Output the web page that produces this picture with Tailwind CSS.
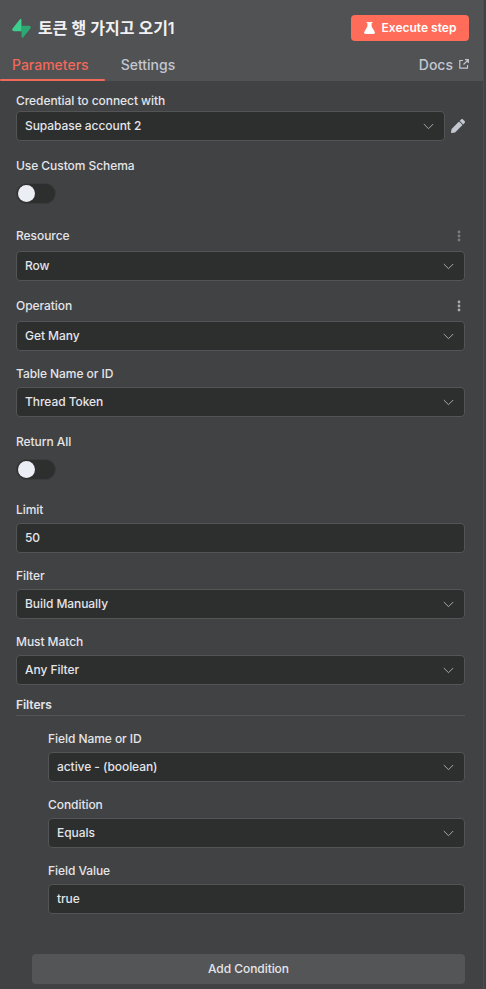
<!DOCTYPE html>
<html lang="en">
<head>
  <meta charset="UTF-8" />
  <title>Node Parameters</title>
  <script src="https://cdn.jsdelivr.net/npm/@tailwindcss/browser@4"></script>
</head>
<body class="bg-[#414244] font-['Inter','Noto_Sans_CJK_KR',sans-serif] text-[12px] font-medium tracking-[-0.06px] text-[#e4e5e9] h-[989px] overflow-hidden">
  <div class="w-[484px] h-[989px] border-r border-r-[#4c4d4f]">

    <!-- Header -->
    <div class="bg-[#515254] h-[81px] relative">
      <div class="flex justify-between pl-[12px] pr-[14px] pt-[15px] h-[56px] items-start">
        <div class="flex items-center h-[26px] gap-[7px]">
          <svg class="w-[19px] h-[19px]" viewBox="0 0 109 113">
            <path d="M63.7 110.3c-2.9 3.6-8.7 1.6-8.8-3l-1-67.5h45.8c8.3 0 12.9 9.6 7.7 16z" fill="#2ea872"/>
            <path d="M45.3 2.1c2.9-3.6 8.7-1.6 8.8 3l.4 67.5H9.3c-8.3 0-12.9-9.6-7.7-16z" fill="#3ecf8e"/>
          </svg>
          <span class="text-[16px] font-semibold text-[#f1f1f3] tracking-[0px]">토큰 행 가지고 오기1</span>
        </div>
        <button class="w-[118px] h-[26px] bg-[#ff6d5a] rounded-[4px] flex items-center justify-center gap-[7px] text-white font-semibold text-[12px] tracking-[0px]">
          <svg class="w-[11px] h-[12px]" viewBox="0 0 11 12" fill="#fff">
            <path d="M2.5 0h6v1H7.6v3.4L10.8 10c.4.9-.2 2-1.2 2H1.4C.4 12-.2 10.900.2 10l3.2-5.600V1h-.9z"/>
          </svg>
          Execute step
        </button>
      </div>
      <div class="flex items-center justify-between pl-[12px] pr-[14px] h-[16px] text-[14px] tracking-[0px]">
        <div class="flex gap-[32px]">
          <span class="text-[#f0695a] font-medium">Parameters</span>
          <span class="text-[#c3c7d0] font-medium">Settings</span>
        </div>
        <div class="flex items-center gap-[6px] text-[#c3c7d0]">
          <span>Docs</span>
          <svg class="w-[10px] h-[10px]" viewBox="0 0 10 10" fill="none" stroke="#c3c7d0" stroke-width="1.200">
            <path d="M4 1.500H.8v7.700h7.700V6M4.500 5.500 9.200.8M6 .7h3.300V4"/>
          </svg>
        </div>
      </div>
      <div class="absolute left-0 bottom-0 w-[105px] h-[2px] bg-[#f0695a] rounded-full"></div>
    </div>

    <!-- Parameters -->
    <div class="pl-[16px] pr-[18px]">
      <div class="pt-[10px]">
        <div class="h-[20px] leading-[20px]">Credential to connect with</div>
        <div class="flex items-center">
          <div class="w-[429px] shrink-0 h-[30px] bg-[#2d2e2e] border border-[#535456] rounded-[4px] flex items-center justify-between pl-[8px] pr-[10px]">
            <span>Supabase account 2</span>
            <svg class="w-[11px] h-[7px]" viewBox="0 0 11 7" fill="none" stroke="#a5a7ac" stroke-width="1"><path d="M.8 1l4.700 4.700L10.200 1"/></svg>
          </div>
          <svg class="w-[14px] h-[14px] ml-[6px] shrink-0" viewBox="0 0 512 512" fill="#c3c7d0">
            <path d="M497.900 142.100l-46.100 46.100c-4.700 4.700-12.300 4.700-17 0l-111-111c-4.700-4.700-4.700-12.300 0-17l46.100-46.100c18.700-18.700 49.100-18.700 67.900 0l60.100 60.100c18.800 18.700 18.800 49.100 0 67.900zM284.200 99.800L21.600 362.400.4 483.900c-2.900 16.400 11.400 30.600 27.800 27.800l121.500-21.300 262.600-262.600c4.700-4.700 4.700-12.300 0-17l-111-111c-4.800-4.700-12.400-4.700-17.100 0z"/>
          </svg>
        </div>
      </div>

      <div class="mt-[15px] h-[20px] leading-[20px]">Use Custom Schema</div>
      <div class="mt-[7px] w-[40px] h-[21px] bg-[#2d2e2e] border border-[#3a3b3d] rounded-full flex items-center pl-[1px]">
        <div class="w-[17px] h-[17px] bg-[#eceef5] rounded-full"></div>
      </div>

      <div class="mt-[22px] h-[20px] leading-[20px] flex items-center justify-between">
        <span>Resource</span>
        <svg class="w-[4px] h-[14px] mr-[4px]" viewBox="0 0 4 14" fill="#7b7d81"><circle cx="2" cy="3" r="1.400"/><circle cx="2" cy="7" r="1.400"/><circle cx="2" cy="11" r="1.400"/></svg>
      </div>
      <div class="mt-[5px] h-[30px] bg-[#2d2e2e] border border-[#535456] rounded-[4px] flex items-center justify-between pl-[8px] pr-[10px]">
        <span>Row</span>
        <svg class="w-[11px] h-[7px]" viewBox="0 0 11 7" fill="none" stroke="#a5a7ac" stroke-width="1"><path d="M.8 1l4.700 4.700L10.200 1"/></svg>
      </div>

      <div class="mt-[15px] h-[20px] leading-[20px] flex items-center justify-between">
        <span>Operation</span>
        <svg class="w-[4px] h-[14px] mr-[4px]" viewBox="0 0 4 14" fill="#a9abaf"><circle cx="2" cy="3" r="1.400"/><circle cx="2" cy="7" r="1.400"/><circle cx="2" cy="11" r="1.400"/></svg>
      </div>
      <div class="mt-[5px] h-[30px] bg-[#2d2e2e] border border-[#535456] rounded-[4px] flex items-center justify-between pl-[8px] pr-[10px]">
        <span>Get Many</span>
        <svg class="w-[11px] h-[7px]" viewBox="0 0 11 7" fill="none" stroke="#a5a7ac" stroke-width="1"><path d="M.8 1l4.700 4.700L10.200 1"/></svg>
      </div>

      <div class="mt-[13px] h-[20px] leading-[20px]">Table Name or ID</div>
      <div class="mt-[3px] h-[30px] bg-[#2d2e2e] border border-[#535456] rounded-[4px] flex items-center justify-between pl-[8px] pr-[10px]">
        <span>Thread Token</span>
        <svg class="w-[11px] h-[7px]" viewBox="0 0 11 7" fill="none" stroke="#a5a7ac" stroke-width="1"><path d="M.8 1l4.700 4.700L10.200 1"/></svg>
      </div>

      <div class="mt-[15px] h-[20px] leading-[20px]">Return All</div>
      <div class="mt-[7px] w-[40px] h-[21px] bg-[#2d2e2e] border border-[#3a3b3d] rounded-full flex items-center pl-[1px]">
        <div class="w-[17px] h-[17px] bg-[#eceef5] rounded-full"></div>
      </div>

      <div class="mt-[20px] h-[20px] leading-[20px]">Limit</div>
      <div class="mt-[3px] h-[30px] bg-[#2d2e2e] border border-[#535456] rounded-[4px] flex items-center pl-[8px]">50</div>

      <div class="mt-[13px] h-[20px] leading-[20px]">Filter</div>
      <div class="mt-[3px] h-[30px] bg-[#2d2e2e] border border-[#535456] rounded-[4px] flex items-center justify-between pl-[8px] pr-[10px]">
        <span>Build Manually</span>
        <svg class="w-[11px] h-[7px]" viewBox="0 0 11 7" fill="none" stroke="#a5a7ac" stroke-width="1"><path d="M.8 1l4.700 4.700L10.200 1"/></svg>
      </div>

      <div class="mt-[13px] h-[20px] leading-[20px]">Must Match</div>
      <div class="mt-[3px] h-[30px] bg-[#2d2e2e] border border-[#535456] rounded-[4px] flex items-center justify-between pl-[8px] pr-[10px]">
        <span>Any Filter</span>
        <svg class="w-[11px] h-[7px]" viewBox="0 0 11 7" fill="none" stroke="#a5a7ac" stroke-width="1"><path d="M.8 1l4.700 4.700L10.200 1"/></svg>
      </div>

      <!-- Filters -->
      <div class="mt-[10px] h-[21px] leading-[20px] border-b border-[#535456] font-semibold">Filters</div>

      <div class="pl-[32px]">
        <div class="mt-[13px] h-[20px] leading-[20px]">Field Name or ID</div>
        <div class="mt-[3px] h-[30px] bg-[#2d2e2e] border border-[#535456] rounded-[4px] flex items-center justify-between pl-[8px] pr-[10px]">
          <span>active - (boolean)</span>
          <svg class="w-[11px] h-[7px]" viewBox="0 0 11 7" fill="none" stroke="#a5a7ac" stroke-width="1"><path d="M.8 1l4.700 4.700L10.200 1"/></svg>
        </div>

        <div class="mt-[13px] h-[20px] leading-[20px]">Condition</div>
        <div class="mt-[3px] h-[30px] bg-[#2d2e2e] border border-[#535456] rounded-[4px] flex items-center justify-between pl-[8px] pr-[10px]">
          <span>Equals</span>
          <svg class="w-[11px] h-[7px]" viewBox="0 0 11 7" fill="none" stroke="#a5a7ac" stroke-width="1"><path d="M.8 1l4.700 4.700L10.200 1"/></svg>
        </div>

        <div class="mt-[13px] h-[20px] leading-[20px]">Field Value</div>
        <div class="mt-[3px] h-[30px] bg-[#2d2e2e] border border-[#535456] rounded-[4px] flex items-center pl-[8px]">true</div>
      </div>

      <button class="mt-[40px] ml-[16px] w-[433px] h-[30px] bg-[#545557] rounded-[4px] text-[12px] font-medium text-[#e4e5e9] flex items-center justify-center">Add Condition</button>
    </div>
  </div>
</body>
</html>
